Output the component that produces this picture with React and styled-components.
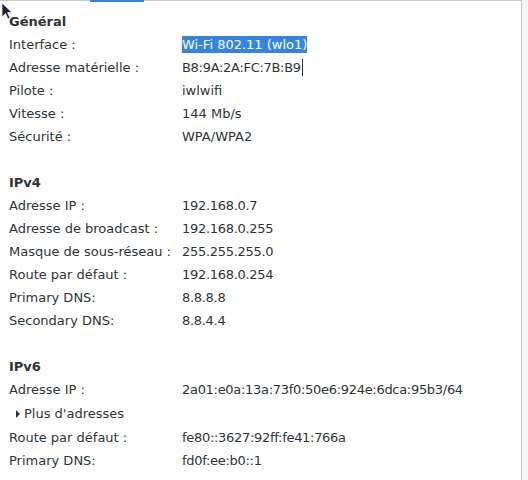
import styled, { createGlobalStyle } from "styled-components";

const GlobalStyle = createGlobalStyle`
  html, body {
    margin: 0;
    background: #f6f5f4;
  }
  body {
    font-family: "DejaVu Sans", "Liberation Sans", sans-serif;
    font-size: 13px;
    color: #2e3436;
  }
`;

// addresses render a little tighter than the labels in the original
const SECTIONS = [
  {
    title: "Général",
    rows: [
      { label: "Interface :", value: "Wi-Fi 802.11 (wlo1)", selected: true },
      { label: "Adresse matérielle :", value: "B8:9A:2A:FC:7B:B9", caret: true, tight: true },
      { label: "Pilote :", value: "iwlwifi" },
      { label: "Vitesse :", value: "144 Mb/s" },
      { label: "Sécurité :", value: "WPA/WPA2" },
    ],
  },
  {
    title: "IPv4",
    rows: [
      { label: "Adresse IP :", value: "192.168.0.7", tight: true },
      { label: "Adresse de broadcast :", value: "192.168.0.255", tight: true },
      { label: "Masque de sous-réseau :", value: "255.255.255.0", tight: true },
      { label: "Route par défaut :", value: "192.168.0.254", tight: true },
      { label: "Primary DNS:", value: "8.8.8.8", tight: true },
      { label: "Secondary DNS:", value: "8.8.4.4", tight: true },
    ],
  },
  {
    title: "IPv6",
    rows: [
      { label: "Adresse IP :", value: "2a01:e0a:13a:73f0:50e6:924e:6dca:95b3/64", tight: true },
      { expander: "Plus d'adresses" },
      { label: "Route par défaut :", value: "fe80::3627:92ff:fe41:766a", tight: true },
      { label: "Primary DNS:", value: "fd0f:ee:b0::1", tight: true },
    ],
  },
];

const Pointer = () => (
  <PointerSvg width="12" height="20" viewBox="0 0 12 20">
    <path
      d="M1 1 L1 15 L4.5 11.5 L7 17 L9 16 L6.5 10.5 L11 10.5 Z"
      fill="#1c1f3a"
      stroke="#e8e8f0"
      strokeWidth="0.8"
      strokeLinejoin="round"
    />
  </PointerSvg>
);

export default function App() {
  return (
    <>
      <GlobalStyle />
      <Window>
        <Panel>
          <TabLine>
            <TabIndicator />
          </TabLine>
          <Content>
            {SECTIONS.map((section) => (
              <Section key={section.title}>
                <Heading>{section.title}</Heading>
                {section.rows.map((row, i) =>
                  row.expander ? (
                    <Expander key={i}>
                      <Arrow />
                      {row.expander}
                    </Expander>
                  ) : (
                    <Row key={i}>
                      <Label>{row.label}</Label>
                      <Value $tight={row.tight}>
                        {row.selected ? <Selected>{row.value}</Selected> : row.value}
                        {row.caret && <Caret />}
                      </Value>
                    </Row>
                  )
                )}
              </Section>
            ))}
          </Content>
          <Pointer />
        </Panel>
        <Gutter />
      </Window>
    </>
  );
}

const Window = styled.div`
  display: flex;
  width: 528px;
  height: 480px;
  overflow: hidden;
`;

const Panel = styled.div`
  position: relative;
  width: 521px;
  background: #ffffff;
  border-right: 1px solid #cdc7c2;
  display: flex;
  flex-direction: column;
`;

const Gutter = styled.div`
  flex: 1;
  background: #f6f5f4;
`;

const TabLine = styled.div`
  height: 1px;
  background: #cdc7c2;
  display: flex;
`;

const TabIndicator = styled.div`
  margin-left: 90px;
  width: 54px;
  height: 2px;
  background: #3584e4;
`;

const Content = styled.div`
  padding: 9px 0 0 9px;
  display: flex;
  flex-direction: column;
  gap: 23px;
`;

const Section = styled.div`
  display: flex;
  flex-direction: column;
`;

const Heading = styled.div`
  height: 23px;
  line-height: 23px;
  font-weight: bold;
`;

const Row = styled.div`
  display: grid;
  grid-template-columns: 173px 1fr;
  height: 23px;
  align-items: center;
  white-space: nowrap;
`;

const Label = styled.span``;

const Value = styled.span`
  display: flex;
  align-items: center;
  letter-spacing: ${(p) => (p.$tight ? "-0.3px" : "normal")};
`;

const Selected = styled.span`
  background: #3584e4;
  color: #ffffff;
  line-height: 17px;
`;

const Caret = styled.span`
  display: inline-block;
  width: 1px;
  height: 17px;
  margin-left: 1px;
  background: #2e3436;
`;

const Expander = styled.div`
  height: 25px;
  display: flex;
  align-items: center;
  padding-left: 7px;
  gap: 4px;
`;

const Arrow = styled.span`
  width: 0;
  height: 0;
  border-top: 4px solid transparent;
  border-bottom: 4px solid transparent;
  border-left: 4px solid #2e3436;
`;

const PointerSvg = styled.svg`
  position: absolute;
  left: 1px;
  top: 2px;
`;
